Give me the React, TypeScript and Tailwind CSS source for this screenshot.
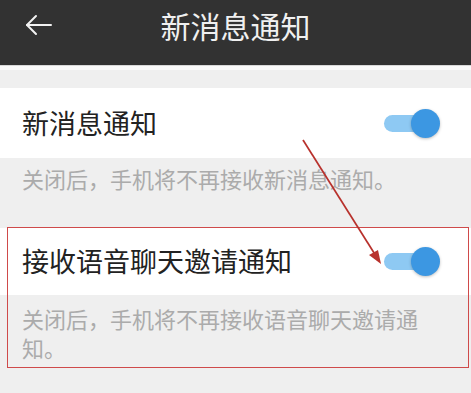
const Toggle = () => (
  <div className="relative w-[56px] h-[29px]">
    <div className="absolute left-0 top-[6px] w-[50px] h-[17px] rounded-full bg-[#8ec9f3]" />
    <div className="absolute right-0 top-0 w-[29px] h-[29px] rounded-full bg-[#3c97e2] shadow-[0_1px_3px_rgba(0,0,0,0.25)]" />
  </div>
);

const font = { fontFamily: '"Noto Sans CJK SC", "Noto Sans", sans-serif' };

export default function App() {
  return (
    <div className="relative w-[471px] h-[393px] bg-[#efefef] overflow-hidden" style={font}>
      <div className="h-[65px] bg-[#323232] grid grid-cols-[80px_1fr_80px] items-start pt-[6px]">
        <div className="pl-[25px] pt-[8px]">
          <svg width="28" height="22" viewBox="0 0 28 22" fill="none" stroke="#f2f2f2" strokeWidth="2" strokeLinecap="round" strokeLinejoin="round">
            <path d="M2 11h24" />
            <path d="M11 2L2 11l9 9" />
          </svg>
        </div>
        <div className="text-center text-[30px] leading-[38px] text-[#f0f0f0]">新消息通知</div>
        <div />
      </div>
      <div className="h-[5px] bg-[#fafafa] border-t border-[#d8d8d8]" />
      <div className="h-[18px]" />

      <div className="h-[70px] bg-white flex items-center justify-between pl-[22px] pr-[31px]">
        <span className="text-[27px] text-[#222]">新消息通知</span>
        <Toggle />
      </div>
      <div className="h-[70px] pl-[22px] pr-[44px] pt-[6px] text-[22px] leading-[29px] text-[#ababab]">
        关闭后，手机将不再接收新消息通知。
      </div>

      <div className="h-[67px] bg-white flex items-center justify-between pl-[22px] pr-[31px]">
        <span className="text-[27px] text-[#222]">接收语音聊天邀请通知</span>
        <Toggle />
      </div>
      <div className="pl-[22px] pr-[44px] pt-[9px] pb-[5px] text-[22px] leading-[29px] text-[#ababab]">
        关闭后，手机将不再接收语音聊天邀请通知。
      </div>

      <div className="absolute left-[7px] top-[227px] w-[462px] h-[141px] border-[1.5px] border-[#cf4a4a]" />

      <svg className="absolute left-0 top-0" width="471" height="393">
        <line x1="303" y1="140" x2="376" y2="256" stroke="#b8312c" strokeWidth="1.7" />
        <path d="M381 264 L369 255 L378 250 Z" fill="#b8312c" />
      </svg>
    </div>
  );
}
